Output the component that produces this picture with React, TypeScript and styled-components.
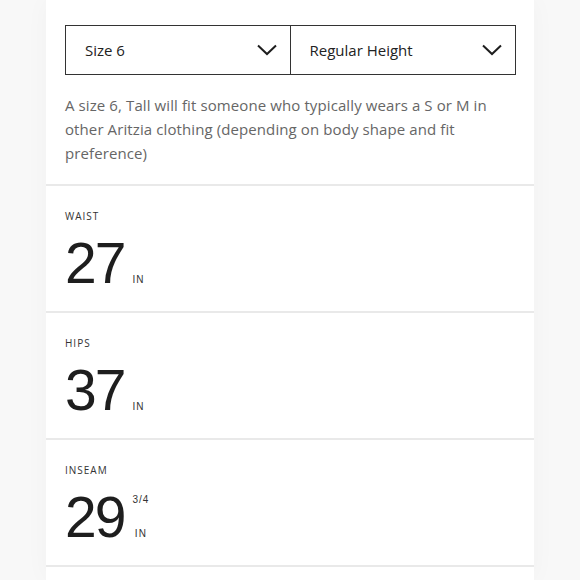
import React from 'react'
import styled, { createGlobalStyle } from 'styled-components'

const GlobalStyle = createGlobalStyle`
  html, body {
    margin: 0;
    padding: 0;
    background: #f8f8f8;
  }
  body {
    font-family: "Open Sans", "Liberation Sans", sans-serif;
  }
`

const Card = styled.div`
  margin-left: 46px;
  width: 488px;
  min-height: 580px;
  background: #ffffff;
  box-shadow: 0 0 24px rgba(0, 0, 0, 0.03);
`

const Top = styled.div`
  padding: 25px 18px 19px 19px;
`

const SelectRow = styled.div`
  display: grid;
  grid-template-columns: 1fr 1fr;
  height: 50px;
  border: 1.5px solid #333333;
  box-sizing: border-box;
`

const Select = styled.div<{ divided?: boolean }>`
  display: flex;
  align-items: center;
  justify-content: space-between;
  padding: 0 13px 0 19px;
  font-size: 15px;
  color: #222222;
  border-right: ${({ divided }) => (divided ? '1.5px solid #333333' : 'none')};
`

const Hint = styled.p`
  margin: 18px 0 0;
  font-size: 15px;
  line-height: 24px;
  letter-spacing: 0.1px;
  color: #666666;
`

const Section = styled.div`
  border-top: 2px solid #e9e9e9;
  padding: 24px 19px 19px;

  &:last-child {
    border-bottom: 2px solid #e9e9e9;
  }
`

const Label = styled.div`
  font-size: 10px;
  line-height: 12px;
  letter-spacing: 1px;
  text-transform: uppercase;
  color: #333333;
`

const ValueRow = styled.div`
  display: flex;
  align-items: stretch;
  margin-top: 13px;
`

const Number = styled.div`
  font-family: "Liberation Sans", Arial, sans-serif;
  font-size: 57px;
  line-height: 57px;
  letter-spacing: -2px;
  color: #1e1e1e;
`

const Units = styled.div`
  display: flex;
  flex-direction: column;
  align-items: center;
  justify-content: flex-end;
  margin-left: 8px;
  padding: 6px 0 7px;
  font-family: "Liberation Sans", Arial, sans-serif;
  font-size: 10px;
  line-height: 10px;
  letter-spacing: 1px;
  color: #333333;

  & > span:first-child:not(:last-child) {
    margin-bottom: auto;
  }
`

const Chevron = () => (
  <svg width="20" height="12" viewBox="0 0 20 12" fill="none">
    <polyline points="1,1.5 10,10 19,1.5" stroke="#1e1e1e" strokeWidth="2" />
  </svg>
)

const measures = [
  { label: 'Waist', value: '27' },
  { label: 'Hips', value: '37' },
  { label: 'Inseam', value: '29', fraction: '3/4' },
]

export default function App() {
  return (
    <>
      <GlobalStyle />
      <Card>
        <Top>
          <SelectRow>
            <Select divided>
              Size 6
              <Chevron />
            </Select>
            <Select>
              Regular Height
              <Chevron />
            </Select>
          </SelectRow>
          <Hint>
            A size 6, Tall will fit someone who typically wears a S or M in other Aritzia clothing
            (depending on body shape and fit preference)
          </Hint>
        </Top>
        {measures.map((m) => (
          <Section key={m.label}>
            <Label>{m.label}</Label>
            <ValueRow>
              <Number>{m.value}</Number>
              <Units>
                {m.fraction && <span>{m.fraction}</span>}
                <span>IN</span>
              </Units>
            </ValueRow>
          </Section>
        ))}
      </Card>
    </>
  )
}
